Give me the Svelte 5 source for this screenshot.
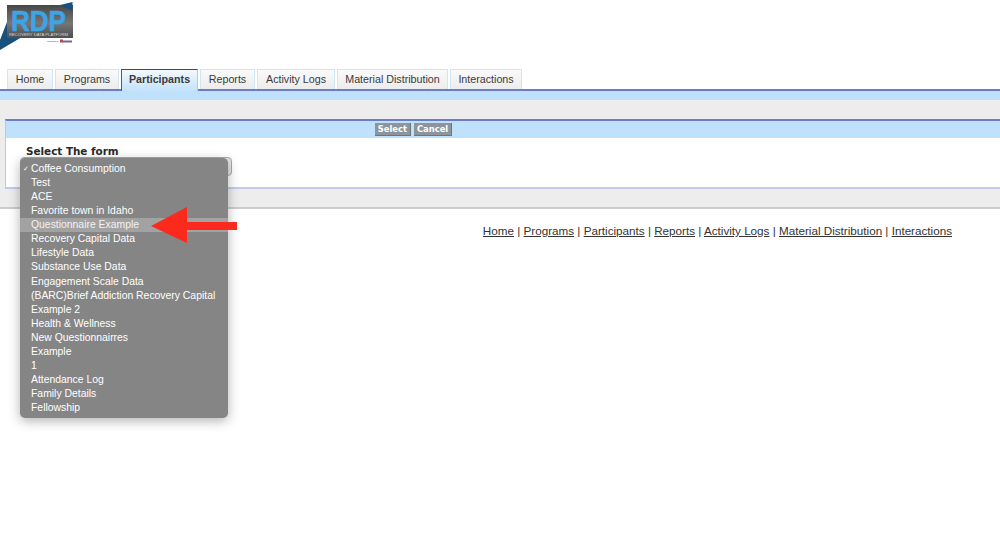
<script>
  const tabs = ['Home','Programs','Participants','Reports','Activity Logs','Material Distribution','Interactions'];
  const widths = [46,64,77,55,78,111,72];
  const options = ['Coffee Consumption','Test','ACE','Favorite town in Idaho','Questionnaire Example','Recovery Capital Data','Lifestyle Data','Substance Use Data','Engagement Scale Data','(BARC)Brief Addiction Recovery Capital','Example 2','Health & Wellness','New Questionnairres','Example','1','Attendance Log','Family Details','Fellowship'];
</script>

<div class="page">
  <header class="logo-row">
    <svg class="logo" width="74" height="52" viewBox="0 0 74 52" aria-label="RDP logo">
      <defs>
        <linearGradient id="g" x1="0" y1="0" x2="0" y2="1"><stop offset="0" stop-color="#474747"/><stop offset="0.55" stop-color="#767676"/><stop offset="1" stop-color="#4e4e4e"/></linearGradient>
      </defs>
      <polygon points="7,22 7,37 22,37 0,50 0,40" fill="#17527f"/>
      <rect x="7" y="5" width="66" height="33" fill="url(#g)"/>
      <polygon points="60,5 72.5,2 72.5,11" fill="#17527f"/>
      <text x="11" y="31" class="rdp" textLength="55" lengthAdjust="spacingAndGlyphs">RDP</text>
      <text x="9" y="36" class="sub" textLength="59" lengthAdjust="spacingAndGlyphs">RECOVERY DATA PLATFORM</text>
      <text x="47" y="42" class="pow" textLength="12" lengthAdjust="spacingAndGlyphs">POWERED BY</text>
      <rect x="60" y="39.5" width="3" height="3" fill="#b04a5a"/>
      <rect x="63" y="40.5" width="9" height="2" fill="#6a6a98"/>
    </svg>
  </header>

  <nav class="tabs">
    {#each tabs as t, i}
      <span class="tab" class:active={i === 2} style="width:{widths[i]}px">{t}</span>
    {/each}
  </nav>
  <div class="strip"></div>

  <main class="band">
    <section class="panel">
      <div class="panel-head">
        <button class="btn">Select</button>
        <button class="btn">Cancel</button>
      </div>
      <div class="panel-body">
        <div class="label">Select The form</div>
        <div class="select"></div>
      </div>
    </section>
  </main>

  <footer class="foot">
    {#each tabs as t, i}
      {#if i > 0}<span class="sep">{' | '}</span>{/if}<a href="#top">{t}</a>
    {/each}
  </footer>

  <ul class="menu">
    {#each options as o, i}
      <li class:hot={i === 4}>{#if i === 0}<span class="check">✓</span>{/if}{o}</li>
    {/each}
  </ul>

  <svg class="arrow" width="90" height="37" viewBox="0 0 90 37" aria-hidden="true">
    <polygon points="1,19 37,0 37,15 87,15 87,23 37,23 37,36" fill="#fb2a1c"/>
  </svg>
</div>

<style>
  :global(body) { margin: 0; background: #fff; }
  .page {
    position: relative;
    width: 1000px;
    height: 552px;
    overflow: hidden;
    font-family: "Liberation Sans", Arial, sans-serif;
    color: #222;
  }
  .logo-row { height: 69px; }
  .logo { display: block; overflow: visible; }
  .rdp { font: bold 30px "Liberation Sans", sans-serif; fill: #3da4e6; stroke: #3da4e6; stroke-width: 0.5px; }
  .sub { font: 3.6px "Liberation Sans", sans-serif; fill: #d8d8d8; }
  .pow { font: 2.4px "Liberation Sans", sans-serif; fill: #444; }
  .tabs {
    display: flex;
    gap: 2px;
    height: 20px;
    padding-left: 7px;
  }
  .tab {
    box-sizing: border-box;
    height: 20px;
    padding-bottom: 2px;
    display: flex;
    align-items: center;
    justify-content: center;
    font-size: 10.7px;
    color: #3a3a3a;
    background: linear-gradient(#fafafa, #ececec);
    border: 1px solid #cfe6f8;
    border-bottom: none;
  }
  .tab.active {
    position: relative;
    z-index: 1;
    height: 22px;
    padding-bottom: 4px;
    font-weight: bold;
    background: linear-gradient(#f4f8fb, #c3e2fb);
    border: 1px solid #a9cdf0;
    border-top: 1px solid #2c46a8;
    border-left-color: #3c58b4;
    border-right-color: #a9cdf0;
    border-bottom: none;
  }
  .strip {
    height: 9px;
    background: #bfe1fb;
    border-top: 2px solid #6b7cc8;
  }
  .band {
    background: #ededed;
    padding: 19px 0 18px 5px;
    border-bottom: 2px solid #cccccc;
  }
  .panel {
    background: #fff;
    border-left: 1px solid #b9c6e8;
    border-top: 2px solid #6b7cc8;
    border-bottom: 2px solid #c0cbe8;
  }
  .panel-head {
    height: 17px;
    background: #bfe1fb;
    display: flex;
    align-items: center;
    justify-content: center;
    gap: 3px;
    padding-right: 179px;
  }
  .btn {
    box-sizing: border-box;
    height: 13px;
    padding: 0 3px;
    border: none;
    border-right: 1px solid #70757c;
    border-bottom: 1px solid #70757c;
    background: #8e949c;
    color: #fff;
    font: bold 8.4px "DejaVu Sans", sans-serif;
    line-height: 12px;
  }
  .panel-body { height: 49px; padding: 7px 0 0 20px; box-sizing: border-box; }
  .label {
    font: bold 10.4px "DejaVu Sans", sans-serif;
    color: #2a2a2a;
    line-height: 13px;
  }
  .select {
    width: 212px;
    height: 19px;
    margin: -1px 0 0 -6px;
    box-sizing: border-box;
    background: #e4e4e4;
    border: 1px solid #aaa;
    border-radius: 4px;
  }
  .foot {
    position: absolute;
    top: 224px;
    right: 48px;
    font-size: 11.68px;
    line-height: 14px;
    color: #333;
    white-space: nowrap;
  }
  .foot a { color: #333; }
  .menu {
    position: absolute;
    left: 20px;
    top: 158px;
    width: 208px;
    height: 260px;
    box-sizing: border-box;
    margin: 0;
    padding: 3.8px 0 0;
    list-style: none;
    background: #858585;
    border-radius: 5px;
    box-shadow: 0 3px 12px rgba(0,0,0,.3);
    color: #fff;
    font-size: 10.4px;
  }
  .menu li {
    position: relative;
    height: 14.1px;
    line-height: 14.1px;
    padding-left: 11px;
    white-space: nowrap;
  }
  .menu li.hot { background: #a2a2a2; color: #f2f2f2; }
  .check { position: absolute; left: 3px; font-size: 7px; }
  .arrow { position: absolute; left: 150px; top: 207px; }
</style>
